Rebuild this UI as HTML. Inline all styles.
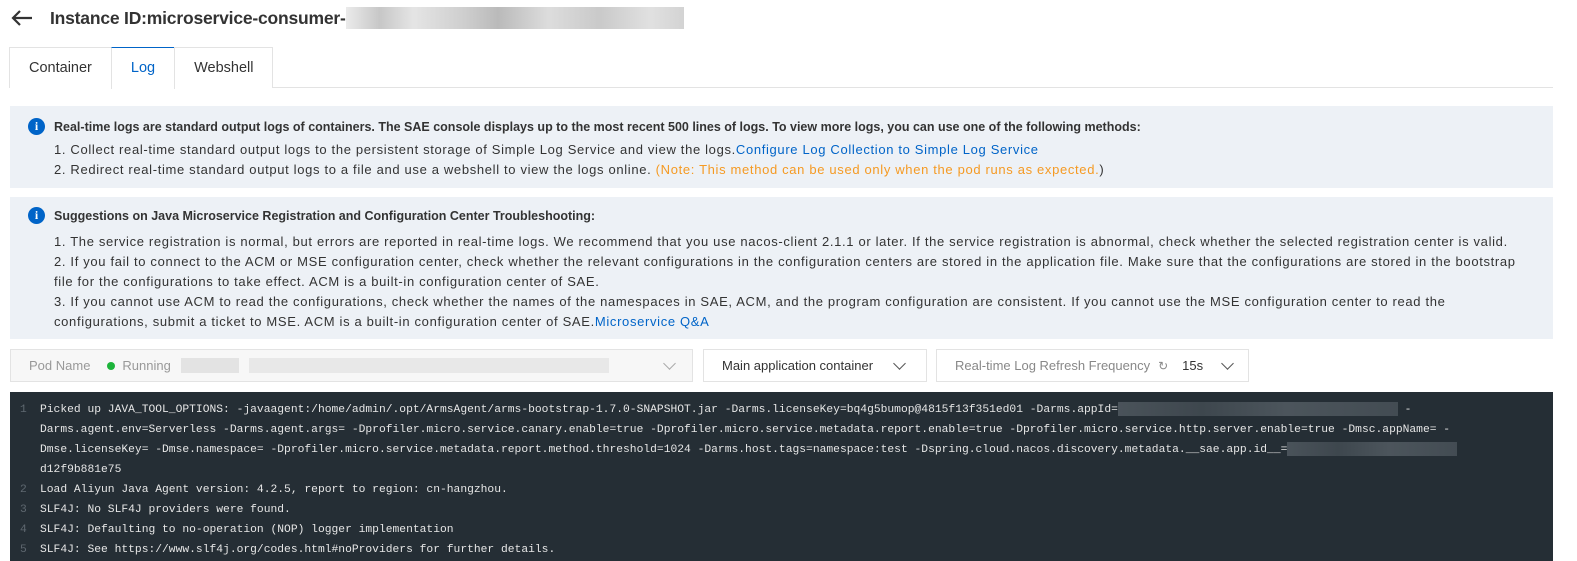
<!DOCTYPE html>
<html><head><meta charset="utf-8"><style>
*{box-sizing:border-box;margin:0;padding:0}
body{width:1577px;height:561px;overflow:hidden;background:#fff;font-family:"Liberation Sans",sans-serif;color:#333;font-size:13px;letter-spacing:.66px}
.hdr{position:absolute;left:10px;top:6px;height:24px;display:flex;align-items:center;letter-spacing:0}
.hdr h1{font-size:17.5px;font-weight:bold;color:#333;margin-left:16px;letter-spacing:-0.2px}
.blur{display:inline-block;height:22px;width:338px;background:linear-gradient(90deg,#e6e6e6,#b9b9b9 10%,#dedede 20%,#c2c2c2 35%,#a9a9a9 45%,#d4d4d4 60%,#bcbcbc 75%,#d9d9d9 90%,#c8c8c8);vertical-align:middle;opacity:.8}
.tabs{position:absolute;left:9px;top:47px;display:flex;width:1544px;border-bottom:1px solid #e3e3e3;height:41px;letter-spacing:0}
.tab{height:41px;border:1px solid #e3e3e3;border-bottom:none;padding:0 19px;line-height:40px;font-size:14.5px;color:#333;margin-right:-1px;background:#fff}
.tab.a{color:#0064c8;border-top:1px solid #0064c8;height:42px}
.info{position:absolute;left:10px;width:1543px;background:#edf1f6}
.info .t{position:relative;padding-left:44px;font-weight:bold;color:#333;line-height:20px;font-size:12.5px;letter-spacing:0;margin-bottom:4px}
.info .i{position:absolute;left:18px;top:1px;width:17px;height:17px;border-radius:50%;background:#0064c8;color:#fff;font-size:12px;font-weight:bold;text-align:center;line-height:17px;font-family:"Liberation Serif",serif}
.info p{padding-left:44px;line-height:20px;padding-right:14px}
a{color:#0064c8;text-decoration:none}
.or{color:#f59a23}
.sel{position:absolute;top:349px;height:33px;border:1px solid #e3e3e3;display:flex;align-items:center;font-size:13px;white-space:nowrap;letter-spacing:0}
.chev{width:9px;height:9px;border-right:1.3px solid #555;border-bottom:1.3px solid #555;transform:rotate(45deg);display:inline-block;margin-top:-5px;flex:none}
.log{position:absolute;left:10px;top:392px;width:1543px;height:169px;background:#252e35;color:#e6e6e6;font-family:"Liberation Mono",monospace;font-size:11.3px;padding-top:8px;letter-spacing:0}
.ln{position:relative;padding-left:30px;line-height:20px;white-space:nowrap}
.ln b{position:absolute;left:10px;font-weight:normal;color:#5f6870}
.bl{display:inline-block;height:14px;vertical-align:middle;background:linear-gradient(90deg,#4a535a,#3e474e 30%,#4c555c 60%,#434c53)}
</style></head><body>
<div class="hdr"><svg width="24" height="20" viewBox="0 0 24 20"><path d="M22 10H3M10 3L3 10l7 7" stroke="#333" stroke-width="2.2" fill="none"/></svg><h1>Instance ID:microservice-consumer-</h1><span class="blur"></span></div>
<div class="tabs"><div class="tab">Container</div><div class="tab a">Log</div><div class="tab">Webshell</div></div>
<div class="info" style="top:106px;height:82px;padding-top:11px">
<div class="t" style="margin-bottom:3px"><span class="i">i</span>Real-time logs are standard output logs of containers. The SAE console displays up to the most recent 500 lines of logs. To view more logs, you can use one of the following methods:</div>
<p>1. Collect real-time standard output logs to the persistent storage of Simple Log Service and view the logs.<a>Configure Log Collection to Simple Log Service</a></p>
<p>2. Redirect real-time standard output logs to a file and use a webshell to view the logs online. <span class="or">(Note: This method can be used only when the pod runs as expected.</span>)</p>
</div>
<div class="info" style="top:197px;height:142px;padding-top:9px">
<div class="t" style="margin-bottom:6px"><span class="i">i</span>Suggestions on Java Microservice Registration and Configuration Center Troubleshooting:</div>
<p>1. The service registration is normal, but errors are reported in real-time logs. We recommend that you use nacos-client 2.1.1 or later. If the service registration is abnormal, check whether the selected registration center is valid.</p>
<p>2. If you fail to connect to the ACM or MSE configuration center, check whether the relevant configurations in the configuration centers are stored in the application file. Make sure that the configurations are stored in the bootstrap file for the configurations to take effect. ACM is a built-in configuration center of SAE.</p>
<p>3. If you cannot use ACM to read the configurations, check whether the names of the namespaces in SAE, ACM, and the program configuration are consistent. If you cannot use the MSE configuration center to read the configurations, submit a ticket to MSE. ACM is a built-in configuration center of SAE.<a>Microservice Q&amp;A</a></p>
</div>
<div class="sel" style="left:10px;width:683px;background:#f7f7f7;color:#999"><span style="margin-left:18px">Pod Name</span><span style="width:8px;height:8px;border-radius:50%;background:#1db43b;margin-left:17px;flex:none"></span><span style="margin-left:7px">Running</span><span class="bl" style="background:#e3e3e3;width:58px;height:15px;margin-left:10px"></span><span class="bl" style="background:#e8e8e8;width:360px;height:15px;margin-left:10px"></span><span class="chev" style="margin-left:56px;border-color:#aaa"></span></div>
<div class="sel" style="left:703px;width:224px;color:#333"><span style="margin-left:18px">Main application container</span><span class="chev" style="margin-left:22px"></span></div>
<div class="sel" style="left:936px;width:313px;color:#888"><span style="margin-left:18px">Real-time Log Refresh Frequency</span><span style="margin-left:8px;font-size:12px">↻</span><span style="margin-left:14px;color:#333">15s</span><span class="chev" style="margin-left:20px"></span></div>
<div class="log">
<div class="ln"><b>1</b>Picked up JAVA_TOOL_OPTIONS: -javaagent:/home/admin/.opt/ArmsAgent/arms-bootstrap-1.7.0-SNAPSHOT.jar -Darms.licenseKey=bq4g5bumop@4815f13f351ed01 -Darms.appId=<span class="bl" style="width:280px"></span>  -</div>
<div class="ln">Darms.agent.env=Serverless -Darms.agent.args=  -Dprofiler.micro.service.canary.enable=true -Dprofiler.micro.service.metadata.report.enable=true -Dprofiler.micro.service.http.server.enable=true -Dmsc.appName= -</div>
<div class="ln">Dmse.licenseKey= -Dmse.namespace= -Dprofiler.micro.service.metadata.report.method.threshold=1024 -Darms.host.tags=namespace:test -Dspring.cloud.nacos.discovery.metadata.__sae.app.id__=<span class="bl" style="width:170px"></span></div>
<div class="ln">d12f9b881e75</div>
<div class="ln"><b>2</b>Load Aliyun Java Agent version: 4.2.5, report to region: cn-hangzhou.</div>
<div class="ln"><b>3</b>SLF4J: No SLF4J providers were found.</div>
<div class="ln"><b>4</b>SLF4J: Defaulting to no-operation (NOP) logger implementation</div>
<div class="ln"><b>5</b>SLF4J: See https://www.slf4j.org/codes.html#noProviders for further details.</div>
</div>
</body></html>
